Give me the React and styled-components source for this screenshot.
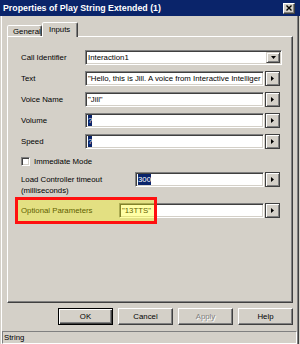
import React from 'react';
import styled, { createGlobalStyle, css } from 'styled-components';

const Global = createGlobalStyle`
  html, body { margin: 0; padding: 0; background: #d4d0c8; }
  body {
    width: 300px; height: 344px; overflow: hidden;
    font-family: "Liberation Sans", Arial, sans-serif;
    color: #000;
  }
`;

const Window = styled.div`
  width: 300px;
  height: 344px;
  display: flex;
  flex-direction: column;
  background: #d4d0c8;
`;

const TitleBar = styled.div`
  height: 16px;
  flex: none;
  background: #0a246a;
  display: flex;
  align-items: center;
  justify-content: space-between;
  padding: 0 5px 0 3px;
  color: #fff;
  font-weight: bold;
  font-size: 8.8px;
  white-space: nowrap;
`;

const CloseButton = styled.div`
  width: 12px;
  height: 11px;
  box-sizing: border-box;
  background: #d4d0c8;
  border: 1px solid;
  border-color: #fff #404040 #404040 #fff;
  box-shadow: inset -1px -1px #808080;
  display: flex;
  align-items: center;
  justify-content: center;
`;

const Body = styled.div`
  flex: 1;
  display: flex;
  flex-direction: column;
  padding-left: 7px;
  box-shadow: inset 1px 0 #d4d0c8, inset 2px 0 #fff, inset -1px 0 #d4d0c8,
    inset -2px 0 #404040, inset -3px 0 #808080;
`;

const TabStrip = styled.div`
  height: 20px;
  flex: none;
  display: flex;
  align-items: flex-end;
  position: relative;
  z-index: 1;
`;

const Tab = styled.div`
  box-sizing: border-box;
  width: ${(p) => p.$w}px;
  height: ${(p) => (p.$active ? 15 : 11)}px;
  margin-bottom: ${(p) => (p.$active ? -1 : 0)}px;
  background: #d4d0c8;
  border: 1px solid;
  border-bottom: none;
  border-color: #fff #404040 transparent #fff;
  box-shadow: inset -1px 0 #808080;
  border-radius: 2px 2px 0 0;
  font-size: 7.8px;
  display: flex;
  align-items: ${(p) => (p.$active ? 'flex-start' : 'center')};
  padding-left: ${(p) => p.$pl}px;
  padding-top: ${(p) => (p.$active ? 2 : 0)}px;
`;

const Panel = styled.div`
  box-sizing: border-box;
  width: 286px;
  height: 267px;
  flex: none;
  border: 1px solid;
  border-color: #fff #404040 #404040 #fff;
  box-shadow: inset -1px -1px #808080;
  padding: 13px 12px 0 13px;
  display: flex;
  flex-direction: column;
`;

const Row = styled.div`
  display: flex;
  align-items: ${(p) => (p.$top ? 'flex-start' : 'center')};
  height: ${(p) => p.$h || 15}px;
  margin-top: ${(p) => p.$mt || 0}px;
  flex: none;
  position: relative;
`;

const Label = styled.div`
  width: ${(p) => p.$w}px;
  flex: none;
  font-size: 7.8px;
  line-height: 11px;
  padding-top: ${(p) => p.$pt || 0}px;
  white-space: nowrap;
`;

const Field = styled.div`
  flex: 1;
  min-width: 0;
  height: 15px;
  box-sizing: border-box;
  border: 1px solid;
  border-color: #808080 #fff #fff #808080;
  box-shadow: inset 1px 1px #404040, inset -1px -1px #d4d0c8;
  background: #fff;
  font-size: 7.8px;
  padding: 0 1px 0 2px;
  white-space: nowrap;
  overflow: hidden;
  display: flex;
  align-items: center;
  margin-right: ${(p) => p.$mr || 0}px;
`;

const Selected = styled.span`
  background: #0a246a;
  color: #fff;
  padding: 1px 0;
`;

const FieldText = styled.span`
  flex: 1;
  overflow: hidden;
`;

const SmallButton = styled.div`
  width: ${(p) => p.$w}px;
  height: ${(p) => p.$h}px;
  flex: none;
  box-sizing: border-box;
  background: #d4d0c8;
  border: 1px solid;
  border-color: ${(p) => (p.$dark ? '#404040' : '#d4d0c8 #404040 #404040 #d4d0c8')};
  box-shadow: inset 1px 1px #fff, inset -1px -1px #808080;
  margin-left: ${(p) => p.$ml || 0}px;
  display: flex;
  align-items: center;
  justify-content: center;
`;

const CheckBox = styled.div`
  width: 9px;
  height: 9px;
  box-sizing: border-box;
  background: #fff;
  border: 1px solid;
  border-color: #808080 #fff #fff #808080;
  box-shadow: inset 1px 1px #404040, inset -1px -1px #d4d0c8;
  margin-right: 4px;
  flex: none;
`;

const CheckText = styled.span`
  font-size: 7.8px;
`;

const Highlight = styled.div`
  position: absolute;
  left: -6px;
  top: -6px;
  width: 142px;
  height: 27px;
  box-sizing: border-box;
  border: 3px solid #ff1010;
  background: rgba(255, 255, 0, 0.35);
  pointer-events: none;
`;

const ButtonRow = styled.div`
  width: 286px;
  height: 17px;
  margin-top: 5px;
  flex: none;
  display: flex;
  justify-content: flex-end;
  gap: 5px;
`;

const DialogButton = styled.div`
  width: 55px;
  height: 17px;
  box-sizing: border-box;
  background: #d4d0c8;
  border: 1px solid;
  border-color: #fff #404040 #404040 #fff;
  box-shadow: inset -1px -1px #808080;
  font-size: 7.8px;
  display: flex;
  align-items: center;
  justify-content: center;
  ${(p) =>
    p.$default &&
    css`
      border-color: #000;
      box-shadow: inset 1px 1px #fff, inset -1px -1px #404040, inset -2px -2px #808080;
    `}
  ${(p) =>
    p.$disabled &&
    css`
      color: #808080;
      text-shadow: 1px 1px #fff;
    `}
`;

const StatusBar = styled.div`
  width: 295px;
  height: 13px;
  margin-top: 6px;
  margin-left: -5px;
  box-sizing: border-box;
  border: 1px solid;
  border-color: #808080 #fff #fff #808080;
  font-size: 7.8px;
  padding-left: 1px;
  display: flex;
  align-items: center;
`;

const RightArrow = () => (
  <svg width="3" height="5" viewBox="0 0 3 5">
    <polygon points="0,0 3,2.5 0,5" fill="#000" />
  </svg>
);

const DownArrow = () => (
  <svg width="5" height="3" viewBox="0 0 5 3">
    <polygon points="0,0 5,0 2.5,3" fill="#000" />
  </svg>
);

const CloseIcon = () => (
  <svg width="6" height="6" viewBox="0 0 6 6">
    <path d="M0.5 0.5 L5.5 5.5 M5.5 0.5 L0.5 5.5" stroke="#000" strokeWidth="1.4" />
  </svg>
);

const InputRow = ({ label, labelW, children, mt }) => (
  <Row $mt={mt}>
    <Label $w={labelW}>{label}</Label>
    <Field>{children}</Field>
    <SmallButton $w={15} $h={15} $ml={1} $dark>
      <RightArrow />
    </SmallButton>
  </Row>
);

export default function App() {
  return (
    <>
      <Global />
      <Window>
        <TitleBar>
          <span>Properties of Play String Extended (1)</span>
          <CloseButton>
            <CloseIcon />
          </CloseButton>
        </TitleBar>
        <Body>
          <TabStrip>
            <Tab $w={35} $pl={5}>General</Tab>
            <Tab $w={36} $pl={6} $active>Inputs</Tab>
          </TabStrip>
          <Panel>
            <Row>
              <Label $w={64}>Call Identifier</Label>
              <Field $mr={-2}>
                <FieldText>Interaction1</FieldText>
                <SmallButton $w={14} $h={11}>
                  <DownArrow />
                </SmallButton>
              </Field>
            </Row>
            <InputRow label="Text" labelW={64} mt={6}>
              "Hello, this is Jill. A voice from Interactive Intelliger
            </InputRow>
            <InputRow label="Voice Name" labelW={64} mt={6}>
              "Jill"
            </InputRow>
            <InputRow label="Volume" labelW={64} mt={6}>
              <Selected>?</Selected>
            </InputRow>
            <InputRow label="Speed" labelW={64} mt={6}>
              <Selected>?</Selected>
            </InputRow>
            <Row $mt={6} $h={12}>
              <CheckBox />
              <CheckText>Immediate Mode</CheckText>
            </Row>
            <Row $mt={5} $h={24} $top>
              <Label $w={114} $pt={2}>
                Load Controller timeout
                <br />
                (milliseconds)
              </Label>
              <Field>
                <Selected>300</Selected>
              </Field>
              <SmallButton $w={15} $h={15} $ml={1} $dark>
                <RightArrow />
              </SmallButton>
            </Row>
            <Row $mt={7}>
              <Label $w={98}>Optional Parameters</Label>
              <Field>"13TTS"</Field>
              <SmallButton $w={15} $h={15} $ml={1} $dark>
                <RightArrow />
              </SmallButton>
              <Highlight />
            </Row>
          </Panel>
          <ButtonRow>
            <DialogButton $default>OK</DialogButton>
            <DialogButton>Cancel</DialogButton>
            <DialogButton $disabled>Apply</DialogButton>
            <DialogButton>Help</DialogButton>
          </ButtonRow>
          <StatusBar>String</StatusBar>
        </Body>
      </Window>
    </>
  );
}
